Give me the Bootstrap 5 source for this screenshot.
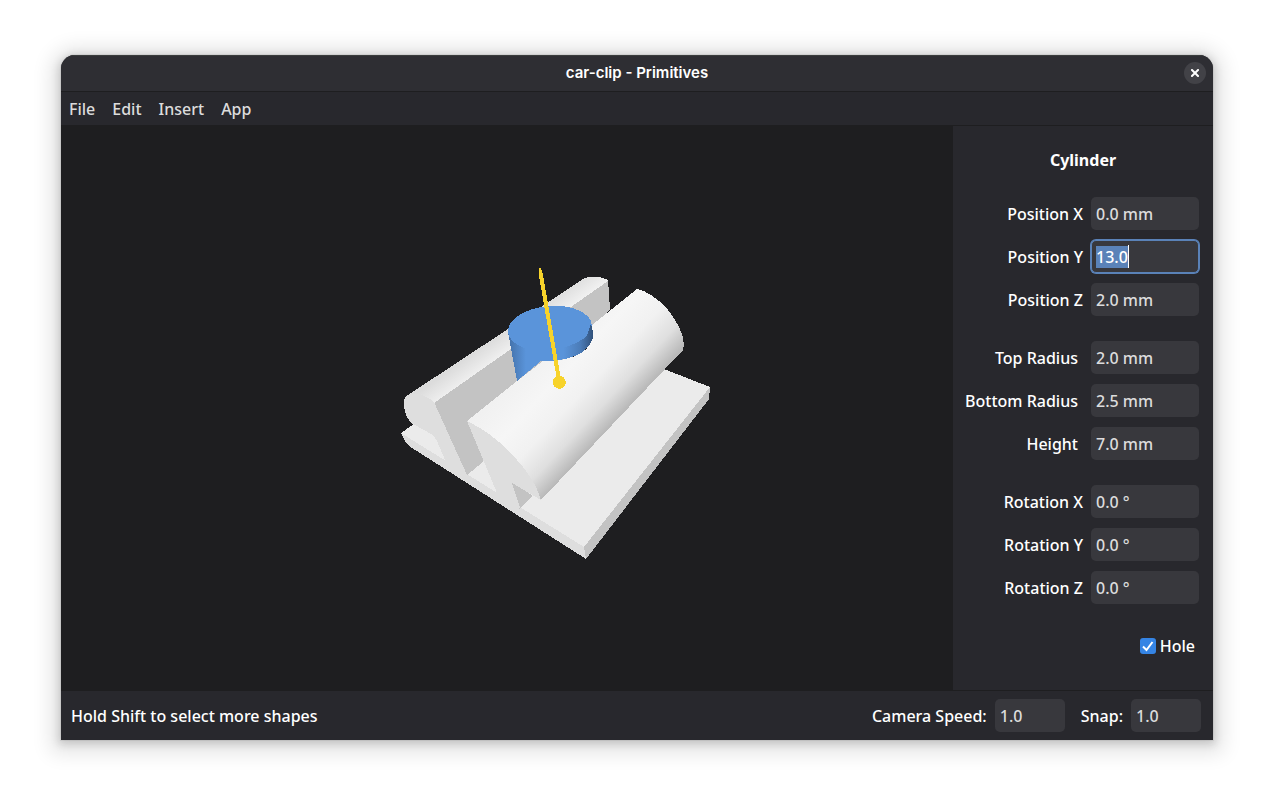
<!DOCTYPE html>
<html lang="en">
<head>
<meta charset="utf-8">
<meta name="viewport" content="width=device-width, initial-scale=1">
<title>car-clip - Primitives</title>
<link href="https://cdn.jsdelivr.net/npm/bootstrap@5.3.0/dist/css/bootstrap.min.css" rel="stylesheet">
<style>
  body { background: #fff; font: 500 16px/23px "Noto Sans", "Open Sans", sans-serif; color: #fff; padding: 55px 61px 67px; }
  .app-window { background: #28282d; border-radius: 14px 14px 0 0; overflow: hidden;
    box-shadow: 0 2px 8px 2px rgba(0,0,0,.15), 0 3px 20px 10px rgba(0,0,0,.11), 0 0 0 1px rgba(0,0,0,.05); }
  .title-bar { background: #2e2e33; height: 37px; border-bottom: 1px solid #1e1e20; box-shadow: inset 0 1px #3a3d3d; }
  .title-bar h1 { font: 600 15px/20px Inter, sans-serif; }
  .close-btn { width: 22px; height: 22px; background: #424247; right: 7px; top: 7px; }
  .menu-bar { height: 34px; border-bottom: 1px solid #1e1e20; padding: 2px 8px 0; gap: 17px; }
  .menu-bar a { color: #dcdcdc; }
  label, .status-text { padding-top: 2px; }
  .scene { background: #1e1e20; }
  .scene svg { shape-rendering: crispEdges; }
  .inspector { width: 260px; padding: 23px 14px 0 0; }
  .inspector h2 { font-size: 16px; line-height: 23px; font-weight: 700; margin: 0 0 25px 14px; }
  .field-group { display: flex; flex-direction: column; gap: 10px; margin-bottom: 25px; }
  .field-row { display: flex; justify-content: flex-end; align-items: center; gap: 8px; }
  .field-group.spaced .field-row { gap: 13px; }
  .field { width: 108px; height: 33px; padding: 4px; border: 1px solid transparent; border-radius: 5px; background: #38383d; color: #dcdcdc; font: inherit; outline: 0; }
  .field.narrow { width: 70px; }
  .field:focus { color: #fff; border-color: #5a82b8; box-shadow: 0 0 0 1px #5a82b8;
    background: linear-gradient(#fff, #fff) 36px 4px / 1px 23px no-repeat, #38383d; }
  .field::selection { background: #5a82b8; color: #fff; }
  .hole-check.form-check-input { width: 16px; height: 16px; margin: 0; border: 0; border-radius: 3px; }
  .hole-check.form-check-input:checked { background-color: #3584e4;
    background-image: url("data:image/svg+xml,%3csvg xmlns='http://www.w3.org/2000/svg' viewBox='0 0 16 16'%3e%3cpath fill='none' stroke='%23fff' stroke-width='2' d='M3 8.5l3.5 3.5L12.500 4'/%3e%3c/svg%3e"); }
  .status-bar { height: 50px; border-top: 1px solid #1e1e20; padding: 0 12px 0 10px; }
  .status-group { display: flex; align-items: center; gap: 8px; }
</style>
</head>
<body class="min-vh-100 d-flex">
<div class="app-window flex-grow-1 d-flex flex-column">
  <header class="title-bar position-relative d-flex align-items-center justify-content-center">
    <h1 class="m-0">car-clip - Primitives</h1>
    <button type="button" class="close-btn position-absolute border-0 rounded-circle p-0 d-flex align-items-center justify-content-center" aria-label="Close">
      <svg width="8" height="8" viewBox="0 0 8 8"><path d="M1 1l6 6M7 1l-6 6" stroke="#fff" stroke-width="2" stroke-linecap="square"/></svg>
    </button>
  </header>
  <nav class="menu-bar d-flex align-items-center">
    <a class="text-decoration-none" href="#">File</a>
    <a class="text-decoration-none" href="#">Edit</a>
    <a class="text-decoration-none" href="#">Insert</a>
    <a class="text-decoration-none" href="#">App</a>
  </nav>
  <div class="d-flex flex-grow-1">
    <main class="scene flex-grow-1 position-relative">
      <svg class="position-absolute w-100 h-100" viewBox="61 126 892 564" role="img" aria-label="3D model of a car clip">
        <defs>
          <linearGradient id="rod" gradientUnits="userSpaceOnUse" x1="463" y1="426" x2="541" y2="499">
            <stop offset="0" stop-color="#f0f0f0"/><stop offset=".35" stop-color="#f6f6f6"/><stop offset=".6" stop-color="#f1f1f1"/><stop offset=".82" stop-color="#dfdfdf"/><stop offset="1" stop-color="#bababa"/>
          </linearGradient>
          <linearGradient id="rail" gradientUnits="userSpaceOnUse" x1="500" y1="334" x2="513" y2="352">
            <stop offset="0" stop-color="#dcdcdc"/><stop offset="1" stop-color="#f3f3f3"/>
          </linearGradient>
          <linearGradient id="wall" gradientUnits="userSpaceOnUse" x1="509" y1="0" x2="593" y2="0">
            <stop offset="0" stop-color="#4472aa"/><stop offset=".2" stop-color="#5a94da"/><stop offset=".65" stop-color="#5a94da"/><stop offset=".85" stop-color="#4b7cb8"/><stop offset="1" stop-color="#31517a"/>
          </linearGradient>
        </defs>
        <path fill="#ebebeb" d="M401 433L414 424L664 369L710 387L584 547Z"/>
        <path fill="#dedede" d="M401 433L584 547L586 559L409 446L405 441Z"/>
        <path fill="#c3c3c3" d="M710 387L709 399L586 559L584 547Z"/>
        <path fill="#c3c3c3" d="M434 402L608 280L610 309L595 330L483 462L467 475Z"/>
        <path fill="url(#rail)" d="M404 398L411 393L508 329L583 279Q594 274 606 279L608 281L434 403L420 398Z"/>
        <path fill="#dedede" d="M404 400Q405 395 414 394Q425 394 434 402L467 475L446 462L437 441L433 435L413 424L410 422Q403 412 404 400Z"/>
        <path fill="url(#wall)" d="M508 332L517 381L541 361Q565 362 581 353Q595 344 593 327Z"/>
        <ellipse cx="550" cy="328.500" rx="42" ry="22.500" transform="rotate(-5 550 329)" fill="#5a94da"/>
        <path fill="#c3c3c3" d="M510 481L533 496L519 509Z"/>
        <path fill="#dedede" d="M467 421L497 493L520 508L512 483L541 500L538 470L500 430Z"/>
        <path fill="url(#rod)" d="M467 421L517 381L543 361Q565 362 581 353Q592 346 593 335L592 325L637 289Q652 292 668 310Q687 335 683 350L665 369L541 500Q537 485 523 467Q497 435 467 421Z"/>
        <path fill="url(#wall)" d="M540 349L541 361Q565 362 581 353Q594 344 593 333L591 324L587 336Q570 350 540 350Z"/>
        <path fill="#f7d32b" d="M539 268H541L543 275L561 380H557L539 276Z"/>
        <circle cx="559.300" cy="382.300" r="6.500" fill="#f7d32b"/>
      </svg>
    </main>
    <aside class="inspector">
      <h2 class="text-center">Cylinder</h2>
      <form>
        <div class="field-group">
          <div class="field-row"><label for="px">Position X</label><input class="field" id="px" value="0.0 mm"></div>
          <div class="field-row"><label for="py">Position Y</label><input class="field" id="py" value="13.0" autofocus></div>
          <div class="field-row"><label for="pz">Position Z</label><input class="field" id="pz" value="2.0 mm"></div>
        </div>
        <div class="field-group spaced">
          <div class="field-row"><label for="rt">Top Radius</label><input class="field" id="rt" value="2.0 mm"></div>
          <div class="field-row"><label for="rb">Bottom Radius</label><input class="field" id="rb" value="2.5 mm"></div>
          <div class="field-row"><label for="ht">Height</label><input class="field" id="ht" value="7.0 mm"></div>
        </div>
        <div class="field-group">
          <div class="field-row"><label for="rx">Rotation X</label><input class="field" id="rx" value="0.0 °"></div>
          <div class="field-row"><label for="ry">Rotation Y</label><input class="field" id="ry" value="0.0 °"></div>
          <div class="field-row"><label for="rz">Rotation Z</label><input class="field" id="rz" value="0.0 °"></div>
        </div>
        <div class="d-flex align-items-center justify-content-end gap-1 pt-1 pe-1">
          <input class="hole-check form-check-input" type="checkbox" id="hole" checked><label for="hole">Hole</label>
        </div>
      </form>
    </aside>
  </div>
  <footer class="status-bar d-flex align-items-center gap-3">
    <span class="status-text me-auto">Hold Shift to select more shapes</span>
    <div class="status-group"><label for="speed">Camera Speed:</label><input class="field narrow" id="speed" value="1.0"></div>
    <div class="status-group"><label for="snap">Snap:</label><input class="field narrow" id="snap" value="1.0"></div>
  </footer>
</div>
<script src="https://cdn.jsdelivr.net/npm/bootstrap@5.3.0/dist/js/bootstrap.bundle.min.js"></script>
<script>
  const active = document.getElementById('py');
  active.focus();
  active.select();
</script>
</body>
</html>
